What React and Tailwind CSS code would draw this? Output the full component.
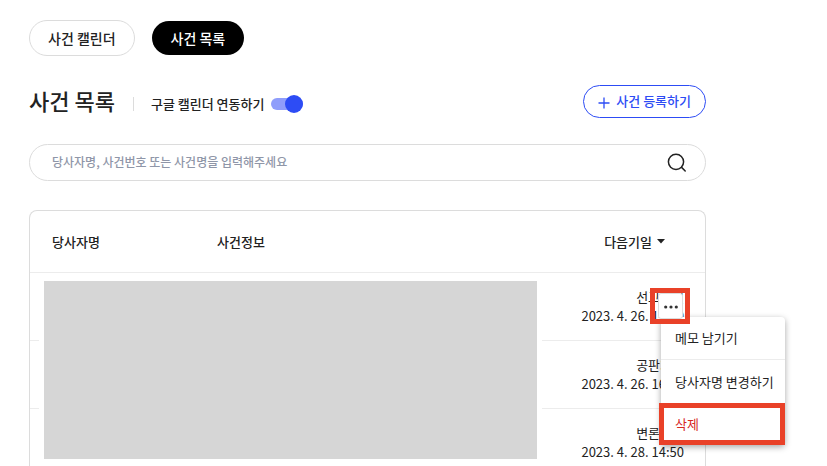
import { useState } from 'react';

const hearings = [
  { id: 1, type: '선고기일', date: '2023. 4. 26. 14:00' },
  { id: 2, type: '공판기일', date: '2023. 4. 26. 16:00' },
  { id: 3, type: '변론기일', date: '2023. 4. 28. 14:50' },
];

function Tabs() {
  return (
    <nav className="flex items-center gap-[17px]">
      <button className="h-9 px-[18px] rounded-full border border-[#dcdcdc] bg-white text-sm font-medium">
        사건 캘린더
      </button>
      <button className="h-[34px] px-[19px] rounded-full bg-black text-white text-sm font-medium">
        사건 목록
      </button>
    </nav>
  );
}

function TitleBar() {
  const [synced, setSynced] = useState(true);

  return (
    <div className="mt-[29px] flex items-center justify-between">
      <div className="flex items-center">
        <h1 className="pb-1 text-[22px] leading-7 font-medium">사건 목록</h1>
        <div className="flex items-center pt-1">
          <span className="ml-[18px] mr-[17px] h-[14px] w-px bg-[#dcdcdc]" />
          <label htmlFor="sync" className="text-[13px] leading-5 font-medium">
            구글 캘린더 연동하기
          </label>
          {/* Toggle */}
          <span className="relative ml-[7px] flex h-5 w-8 items-center">
            <input
              id="sync"
              type="checkbox"
              checked={synced}
              onChange={e => setSynced(e.target.checked)}
              className="peer h-3 w-8 appearance-none rounded-full bg-gray-300 checked:bg-[#8f9dfb]"
            />
            <span className="pointer-events-none absolute left-0 h-[18px] w-[18px] rounded-full bg-gray-500 peer-checked:left-[14px] peer-checked:bg-[#2d4cf5]" />
          </span>
        </div>
      </div>
      <button className="flex h-[33px] items-center gap-1 rounded-full border border-[#2d4cf5] pb-0.5 pl-3 pr-[14px] text-[13px] leading-5 font-medium text-[#2d4cf5]">
        <svg className="mt-1 h-4 w-4" viewBox="0 0 16 16" fill="none" stroke="currentColor" strokeWidth="1.3">
          <path d="M8 2.5v11M2.5 8h11" />
        </svg>
        사건 등록하기
      </button>
    </div>
  );
}

function SearchBox() {
  return (
    <form className="mt-[26px] flex h-[37px] shrink-0 items-center rounded-full border border-[#dcdcdc] pl-[22px] pr-4">
      <input
        type="text"
        aria-label="사건 검색"
        placeholder="당사자명, 사건번호 또는 사건명을 입력해주세요"
        className="h-5 min-w-0 flex-1 pb-0.5 text-xs font-medium outline-none placeholder:text-[#8f96a8]"
      />
      <button type="button" aria-label="검색">
        <svg className="h-6 w-6" viewBox="0 0 24 24" fill="none" stroke="#222" strokeWidth="1.5" strokeLinecap="round">
          <circle cx="11" cy="10.8" r="7.6" />
          <path d="M16.6 16.4l3.6 3.6" />
        </svg>
      </button>
    </form>
  );
}

function RowMenu() {
  return (
    <div className="absolute right-[15px] top-[15px] z-10">
      <ul className="absolute left-[11px] top-[29px] w-[124px] rounded-[4px] bg-white text-left shadow-[0_2px_6px_rgba(0,0,0,0.35)]">
        <li className="border-b border-[#ececec]">
          <button className="h-[42px] w-full pl-[14px] text-left">메모 남기기</button>
        </li>
        <li>
          <button className="h-[43px] w-full pl-[14px] text-left">당사자명 변경하기</button>
        </li>
        <li className="-ml-0.5 border-5 border-[#e94128]">
          <button className="h-8 w-full pl-[11px] text-left text-[#d6281f]">삭제</button>
        </li>
      </ul>
      <div className="relative h-9 w-10 border-5 border-[#e94128] pl-[3px]">
        <button aria-label="더보기" className="flex h-[26px] w-[25px] items-center justify-center rounded-[3px] border border-[#dcdcdc] bg-white">
          <svg className="h-4 w-4 shrink-0" viewBox="0 0 16 16" fill="#333">
            <circle cx="2.7" cy="9" r="1.6" />
            <circle cx="8" cy="9" r="1.6" />
            <circle cx="13.3" cy="9" r="1.6" />
          </svg>
        </button>
      </div>
    </div>
  );
}

function CaseTable() {
  return (
    <div className="relative mt-[29px] flex-1 rounded-t-[8px] border border-b-0 border-[#dcdcdc]">
      <table className="w-full table-fixed text-[13px] leading-[19px]">
        <thead>
          <tr className="h-[61px] border-b border-[#ececec] text-left">
            <th className="w-[165px] pl-[22px] font-medium">당사자명</th>
            <th className="pl-[22px] font-medium">사건정보</th>
            <th className="w-[164px] pr-10 font-medium">
              <button className="ml-auto flex items-center gap-[5px]">
                다음기일
                <svg className="h-[5px] w-2" viewBox="0 0 8 5" fill="#222">
                  <path d="M0 0h8L4 4.5z" />
                </svg>
              </button>
            </th>
          </tr>
        </thead>
        <tbody>
          {hearings.map((hearing, index) => (
            <tr key={hearing.id} className="h-[68px] border-b border-[#ececec] last:border-b-0">
              <td />
              <td />
              <td className="relative pr-[21px] text-right">
                <p>{hearing.type}</p>
                <p>{hearing.date}</p>
                {index === 0 && <RowMenu />}
              </td>
            </tr>
          ))}
        </tbody>
      </table>
      {/* Hidden personal information */}
      <div className="absolute left-[9px] right-[163px] top-[65px] h-[188px] border-5 border-white bg-[#d6d6d6]" />
    </div>
  );
}

export default function App() {
  return (
    <div className="flex h-screen flex-col overflow-hidden bg-white pl-[29px] pr-[121px] pt-5 font-['Noto_Sans_CJK_KR',sans-serif] text-[#222]">
      <Tabs />
      <TitleBar />
      <SearchBox />
      <CaseTable />
    </div>
  );
}
